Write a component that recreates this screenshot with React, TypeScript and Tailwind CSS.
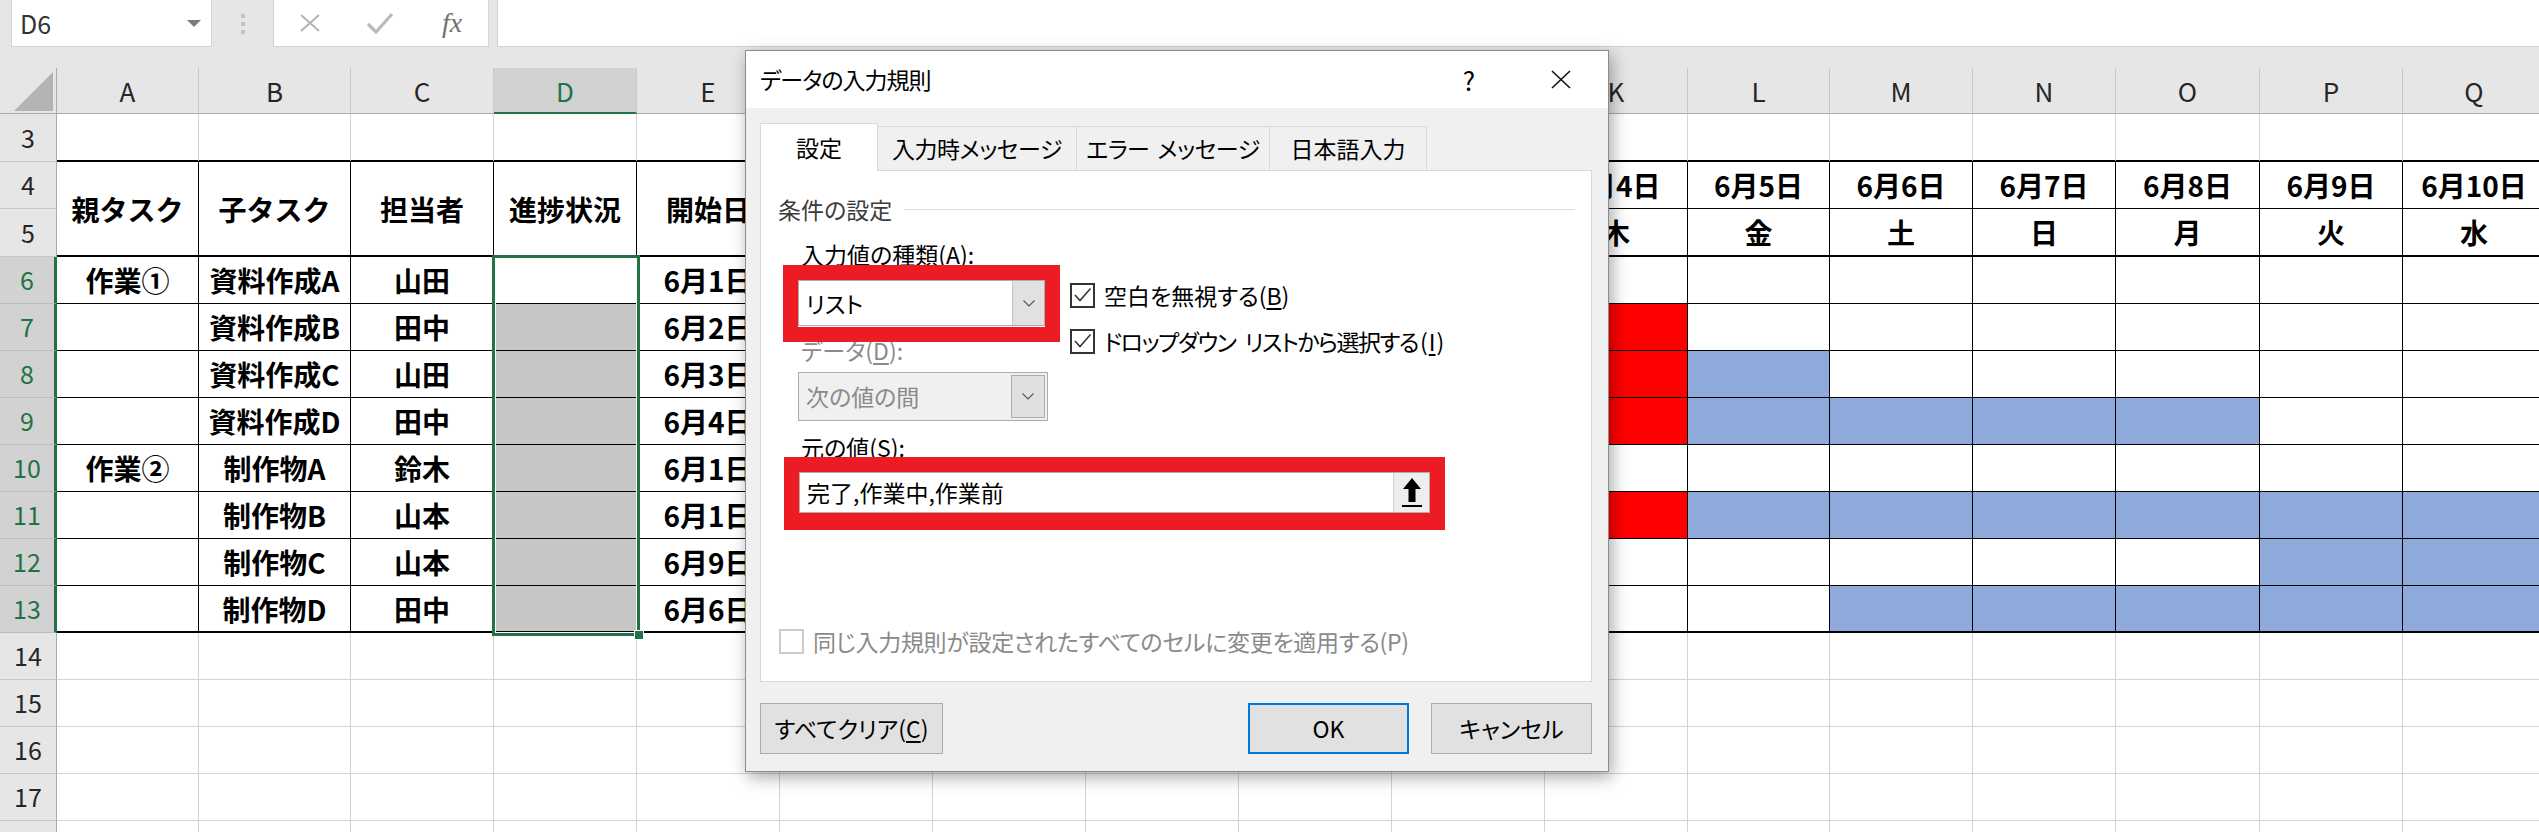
import React from 'react';

const LETTERS = ['', 'A', 'B', 'C', 'D', 'E', '', '', '', '', '', 'K', 'L', 'M', 'N', 'O', 'P', 'Q'];
const ROWS = [3, 4, 5, 6, 7, 8, 9, 10, 11, 12, 13, 14, 15, 16, 17, 18];

const DATA: Record<number, string[]> = {
  4: ['親タスク', '子タスク', '担当者', '進捗状況', '開始日', '', '', '', '', '', '6月4日', '6月5日', '6月6日', '6月7日', '6月8日', '6月9日', '6月10日'],
  5: ['', '', '', '', '', '', '', '', '', '', '木', '金', '土', '日', '月', '火', '水'],
  6: ['作業①', '資料作成A', '山田', '', '6月1日'],
  7: ['', '資料作成B', '田中', '', '6月2日'],
  8: ['', '資料作成C', '山田', '', '6月3日'],
  9: ['', '資料作成D', '田中', '', '6月4日'],
  10: ['作業②', '制作物A', '鈴木', '', '6月1日'],
  11: ['', '制作物B', '山本', '', '6月1日'],
  12: ['', '制作物C', '山本', '', '6月9日'],
  13: ['', '制作物D', '田中', '', '6月6日'],
};

function isRed(r: number, c: number) {
  return c === 11 && (r === 7 || r === 8 || r === 9 || r === 11);
}
function isBlue(r: number, c: number) {
  return (
    (r === 8 && c === 12) ||
    (r === 9 && c >= 12 && c <= 15) ||
    (r === 11 && c >= 12) ||
    (r === 12 && c >= 16) ||
    (r === 13 && c >= 13)
  );
}

function bodyCell(r: number, c: number) {
  const inTable = r >= 4 && r <= 13;
  const cls: string[] = ['flex items-center justify-center overflow-hidden whitespace-nowrap text-[28px] font-bold text-black leading-none border-r border-b'];
  cls.push(inTable ? 'border-r-black' : 'border-r-[#d4d4d4]');
  if (r === 3) cls.push('border-b-2 border-b-black');
  else if (r === 4 && c <= 7) cls.push('row-span-2 border-b-2 border-b-black');
  else if (r === 4) cls.push('border-b-black');
  else if (r === 5 || r === 13) cls.push('border-b-2 border-b-black');
  else if (inTable) cls.push('border-b-black');
  else cls.push('border-b-[#d4d4d4]');

  if (isRed(r, c)) cls.push('bg-[#ff0000]');
  else if (isBlue(r, c)) cls.push('bg-[#8eaadb]');
  else if (c === 4 && r >= 7 && r <= 13) cls.push('bg-[#c6c6c6]');
  else cls.push('bg-white');

  const txt = DATA[r] ? DATA[r][c - 1] || '' : '';
  return (
    <div key={`${r}-${c}`} className={cls.join(' ')}>
      {txt}
    </div>
  );
}

function Sheet() {
  const cells: React.ReactNode[] = [];
  cells.push(
    <div key="corner" className="bg-[#e6e6e6] border-r border-b border-r-[#ababab] border-b-[#ababab] flex items-end justify-end pr-[3px] pb-[2px]">
      <svg width="39" height="39" viewBox="0 0 39 39">
        <polygon points="39,0 39,39 0,39" fill="#b4b4b4" />
      </svg>
    </div>
  );
  for (let c = 1; c < LETTERS.length; c++) {
    const sel = c === 4;
    cells.push(
      <div
        key={`h-${c}`}
        className={
          'flex items-center justify-center text-[26px] font-normal border-r border-r-[#c8c8c8] ' +
          (sel ? 'bg-[#d2d2d2] text-[#217346] border-b-2 border-b-[#217346]' : 'bg-[#e6e6e6] text-[#262626] border-b border-b-[#ababab]')
        }
      >
        {LETTERS[c]}
      </div>
    );
  }
  for (const r of ROWS) {
    const sel = r >= 6 && r <= 13;
    cells.push(
      <div
        key={`rh-${r}`}
        className={
          'flex items-center justify-center text-[25px] font-normal border-b ' +
          (sel
            ? 'bg-[#d2d2d2] text-[#217346] border-r-[3px] border-r-[#217346] border-b-[#bcbcbc]'
            : 'bg-[#e6e6e6] text-[#262626] border-r border-r-[#ababab] border-b-[#c8c8c8]')
        }
      >
        {r === 18 ? '' : r}
      </div>
    );
    for (let c = 1; c < LETTERS.length; c++) {
      if (r === 5 && c <= 7) continue;
      cells.push(bodyCell(r, c));
    }
  }
  return (
    <div className="grid grid-cols-[57px_142px_152px_143px_143px_143px_153px_153px_153px_153px_153px_143px_142px_143px_143px_144px_143px_143px] grid-rows-[46px_48px_47px_48px_repeat(13,47px)] w-[2546px]">
      {cells}
    </div>
  );
}

function FormulaBar() {
  return (
    <div className="h-[68px] bg-[#e6e6e6] flex items-start">
      <div className="ml-[11px] w-[201px] h-[47px] bg-white border-x border-b border-[#d4d4d4] flex items-center pl-[8px] pr-[10px]">
        <span className="flex-1 text-[25px] text-[#333333] leading-none">D6</span>
        <svg width="14" height="7" viewBox="0 0 14 7">
          <polygon points="0,0 14,0 7,7" fill="#7a7a7a" />
        </svg>
      </div>
      <div className="w-[61px] h-[47px] flex flex-col items-center justify-center gap-[4px]">
        <div className="w-[4px] h-[4px] bg-[#c3c3c3]" />
        <div className="w-[4px] h-[4px] bg-[#c3c3c3]" />
        <div className="w-[4px] h-[4px] bg-[#c3c3c3]" />
      </div>
      <div className="w-[216px] h-[47px] bg-white border-x border-b border-[#d4d4d4] flex items-center">
        <div className="w-[70px] flex justify-center pl-[2px]">
          <svg width="22" height="18" viewBox="0 0 22 18">
            <path d="M2 1 L20 17 M20 1 L2 17" stroke="#b4b4b4" strokeWidth="2" fill="none" />
          </svg>
        </div>
        <div className="w-[72px] flex justify-center">
          <svg width="28" height="22" viewBox="0 0 28 22">
            <path d="M2 12 L10 20 L26 2" stroke="#bababa" strokeWidth="3.2" fill="none" />
          </svg>
        </div>
        <div className="w-[72px] flex justify-center">
          <span className="font-['Liberation_Serif',serif] italic text-[28px] text-[#707070] leading-none">fx</span>
        </div>
      </div>
      <div className="ml-[8px] flex-1 h-[47px] bg-white border-l border-b border-[#d4d4d4]" />
    </div>
  );
}

function Chevron() {
  return (
    <svg width="12" height="7" viewBox="0 0 12 7">
      <polyline points="0.5,0.5 6,6 11.5,0.5" stroke="#555555" strokeWidth="1.1" fill="none" />
    </svg>
  );
}

function CheckBox({ checked }: { checked: boolean }) {
  return (
    <div className={'w-[25px] h-[25px] border-2 bg-white flex items-center justify-center ' + (checked ? 'border-[#333333]' : 'border-[#cccccc]')}>
      {checked && (
        <svg width="19" height="16" viewBox="0 0 19 16">
          <polyline points="2,8 7,13.5 17.5,1.5" stroke="#333333" strokeWidth="1.5" fill="none" />
        </svg>
      )}
    </div>
  );
}

function Dialog() {
  return (
    <div className="absolute left-[745px] top-[50px] w-[864px] h-[722px] bg-[#f0f0f0] border border-[#8c8c8c] shadow-[3px_5px_16px_rgba(0,0,0,0.35)] flex flex-col text-[23px] text-black leading-none [font-feature-settings:'palt']">
      <div className="h-[57px] bg-white flex items-center pl-[14px] pr-[22px] shrink-0">
        <span className="flex-1 tracking-[-1px]">データの入力規則</span>
        <span className="w-[40px] text-center text-[26px]">?</span>
        <span className="ml-[47px] w-[50px] flex justify-center">
          <svg width="20" height="19" viewBox="0 0 20 19">
            <path d="M1 1 L19 18 M19 1 L1 18" stroke="#111111" strokeWidth="1.6" fill="none" />
          </svg>
        </span>
      </div>
      <div className="pl-[14px] pr-[16px] pt-[15px]">
        <div className="flex items-end h-[47px]">
          <div className="relative z-10 h-[48px] -mb-px w-[118px] bg-white border border-b-0 border-[#d9d9d9] flex items-center justify-center">設定</div>
          <div className="h-[44px] w-[199px] border-t border-r border-[#d9d9d9] flex items-center justify-center tracking-[-0.5px]">入力時メッセージ</div>
          <div className="h-[44px] w-[193px] border-t border-r border-[#d9d9d9] flex items-center justify-center tracking-[-0.5px]">
            エラー<span className="ml-[8px]">メッセージ</span>
          </div>
          <div className="h-[44px] w-[157px] border-t border-r border-[#d9d9d9] flex items-center justify-center">日本語入力</div>
        </div>
        <div className="relative h-[512px] w-[832px] bg-white border border-[#d9d9d9]">
          <div className="mt-[23px] h-[30px] flex items-center pl-[17px] pr-[16px]">
            <span className="text-[#3c3c3c]">条件の設定</span>
            <div className="flex-1 ml-[12px] h-px bg-[#dcdcdc]" />
          </div>
          <div className="mt-[15px] h-[30px] pl-[40px] flex items-center">
            入力値の種類(<span className="underline underline-offset-[3px]">A</span>):
          </div>
          <div className="mt-[11px] flex pl-[37px]">
            <div className="w-[272px] flex flex-col">
              <div className="w-[247px] h-[46px] bg-white border border-[#adadad] flex">
                <div className="flex-1 flex items-center pl-[7px]">リスト</div>
                <div className="w-[32px] bg-[#e1e1e1] border-l border-[#c4c4c4] flex items-center justify-center">
                  <Chevron />
                </div>
              </div>
              <div className="mt-[9px] h-[30px] pl-[3px] flex items-center text-[#8a8a8a]">
                データ(<span className="underline underline-offset-[3px]">D</span>):
              </div>
              <div className="mt-[7px] w-[250px] h-[49px] bg-[#f0f0f0] border border-[#adadad] flex p-[2px]">
                <div className="flex-1 flex items-center pl-[5px] text-[#8a8a8a]">次の値の間</div>
                <div className="w-[34px] bg-[#e0e0e0] border border-[#adadad] flex items-center justify-center">
                  <Chevron />
                </div>
              </div>
            </div>
            <div className="flex flex-col gap-[16px]">
              <div className="h-[30px] flex items-center">
                <CheckBox checked />
                <span className="ml-[9px]">
                  空白を無視する(<span className="underline underline-offset-[3px]">B</span>)
                </span>
              </div>
              <div className="h-[30px] flex items-center">
                <CheckBox checked />
                <span className="ml-[9px]">
                  <span className="tracking-[-1.5px]">ドロップダウン</span>
                  <span className="ml-[9px] tracking-[-1.5px]">リストから選択する</span>
                  <span className="ml-[2px]">
                    (<span className="underline underline-offset-[3px] px-[1px]">I</span>)
                  </span>
                </span>
              </div>
            </div>
          </div>
          <div className="mt-[11px] h-[30px] pl-[40px] flex items-center">
            元の値(<span className="underline underline-offset-[3px]">S</span>):
          </div>
          <div className="mt-[10px] ml-[38px] w-[631px] h-[41px] bg-white border border-[#adadad] flex">
            <div className="flex-1 pl-[7px] flex items-center">完了,作業中,作業前</div>
            <div className="w-[36px] bg-[#eeeeee] border-l border-[#d0d0d0] flex items-center justify-center">
              <svg width="20" height="30" viewBox="0 0 20 30">
                <polygon points="10,0 19,11 13.5,11 13.5,24 6.5,24 6.5,11 1,11" fill="#000000" />
                <rect x="0" y="27" width="20" height="2" fill="#000000" />
              </svg>
            </div>
          </div>
          <div className="mt-[113px] h-[30px] pl-[18px] flex items-center text-[#8a8a8a]">
            <CheckBox checked={false} />
            <span className="ml-[9px] tracking-[-0.3px]">同じ入力規則が設定されたすべてのセルに変更を適用する(P)</span>
          </div>
          <div className="absolute left-[22px] top-[94px] w-[277px] h-[77px] border-[15px] border-[#ed1c24] pointer-events-none" />
          <div className="absolute left-[23px] top-[286px] w-[661px] h-[73px] border-[15px] border-b-[17px] border-[#ed1c24] pointer-events-none" />
        </div>
        <div className="mt-[21px] flex justify-between">
          <div className="w-[183px] h-[51px] bg-[#e1e1e1] border border-[#adadad] flex items-center justify-center">
            すべてクリア(<span className="underline underline-offset-[3px]">C</span>)
          </div>
          <div className="flex gap-[22px]">
            <div className="w-[161px] h-[51px] bg-[#e1e1e1] border-2 border-[#0078d7] flex items-center justify-center">OK</div>
            <div className="w-[161px] h-[51px] bg-[#e1e1e1] border border-[#adadad] flex items-center justify-center">キャンセル</div>
          </div>
        </div>
      </div>
    </div>
  );
}

export default function App() {
  return (
    <div className="relative w-[2539px] h-[832px] overflow-hidden bg-white font-['Noto_Sans_CJK_JP',sans-serif]">
      <FormulaBar />
      <Sheet />
      <div className="absolute left-[492px] top-[255px] w-[148px] h-[381px] border-[3px] border-[#217346] shadow-[inset_0_0_0_1px_#ffffff] pointer-events-none">
        <div className="absolute right-[-7px] bottom-[-7px] w-[10px] h-[10px] bg-[#217346] border border-white" />
      </div>
      <Dialog />
    </div>
  );
}
